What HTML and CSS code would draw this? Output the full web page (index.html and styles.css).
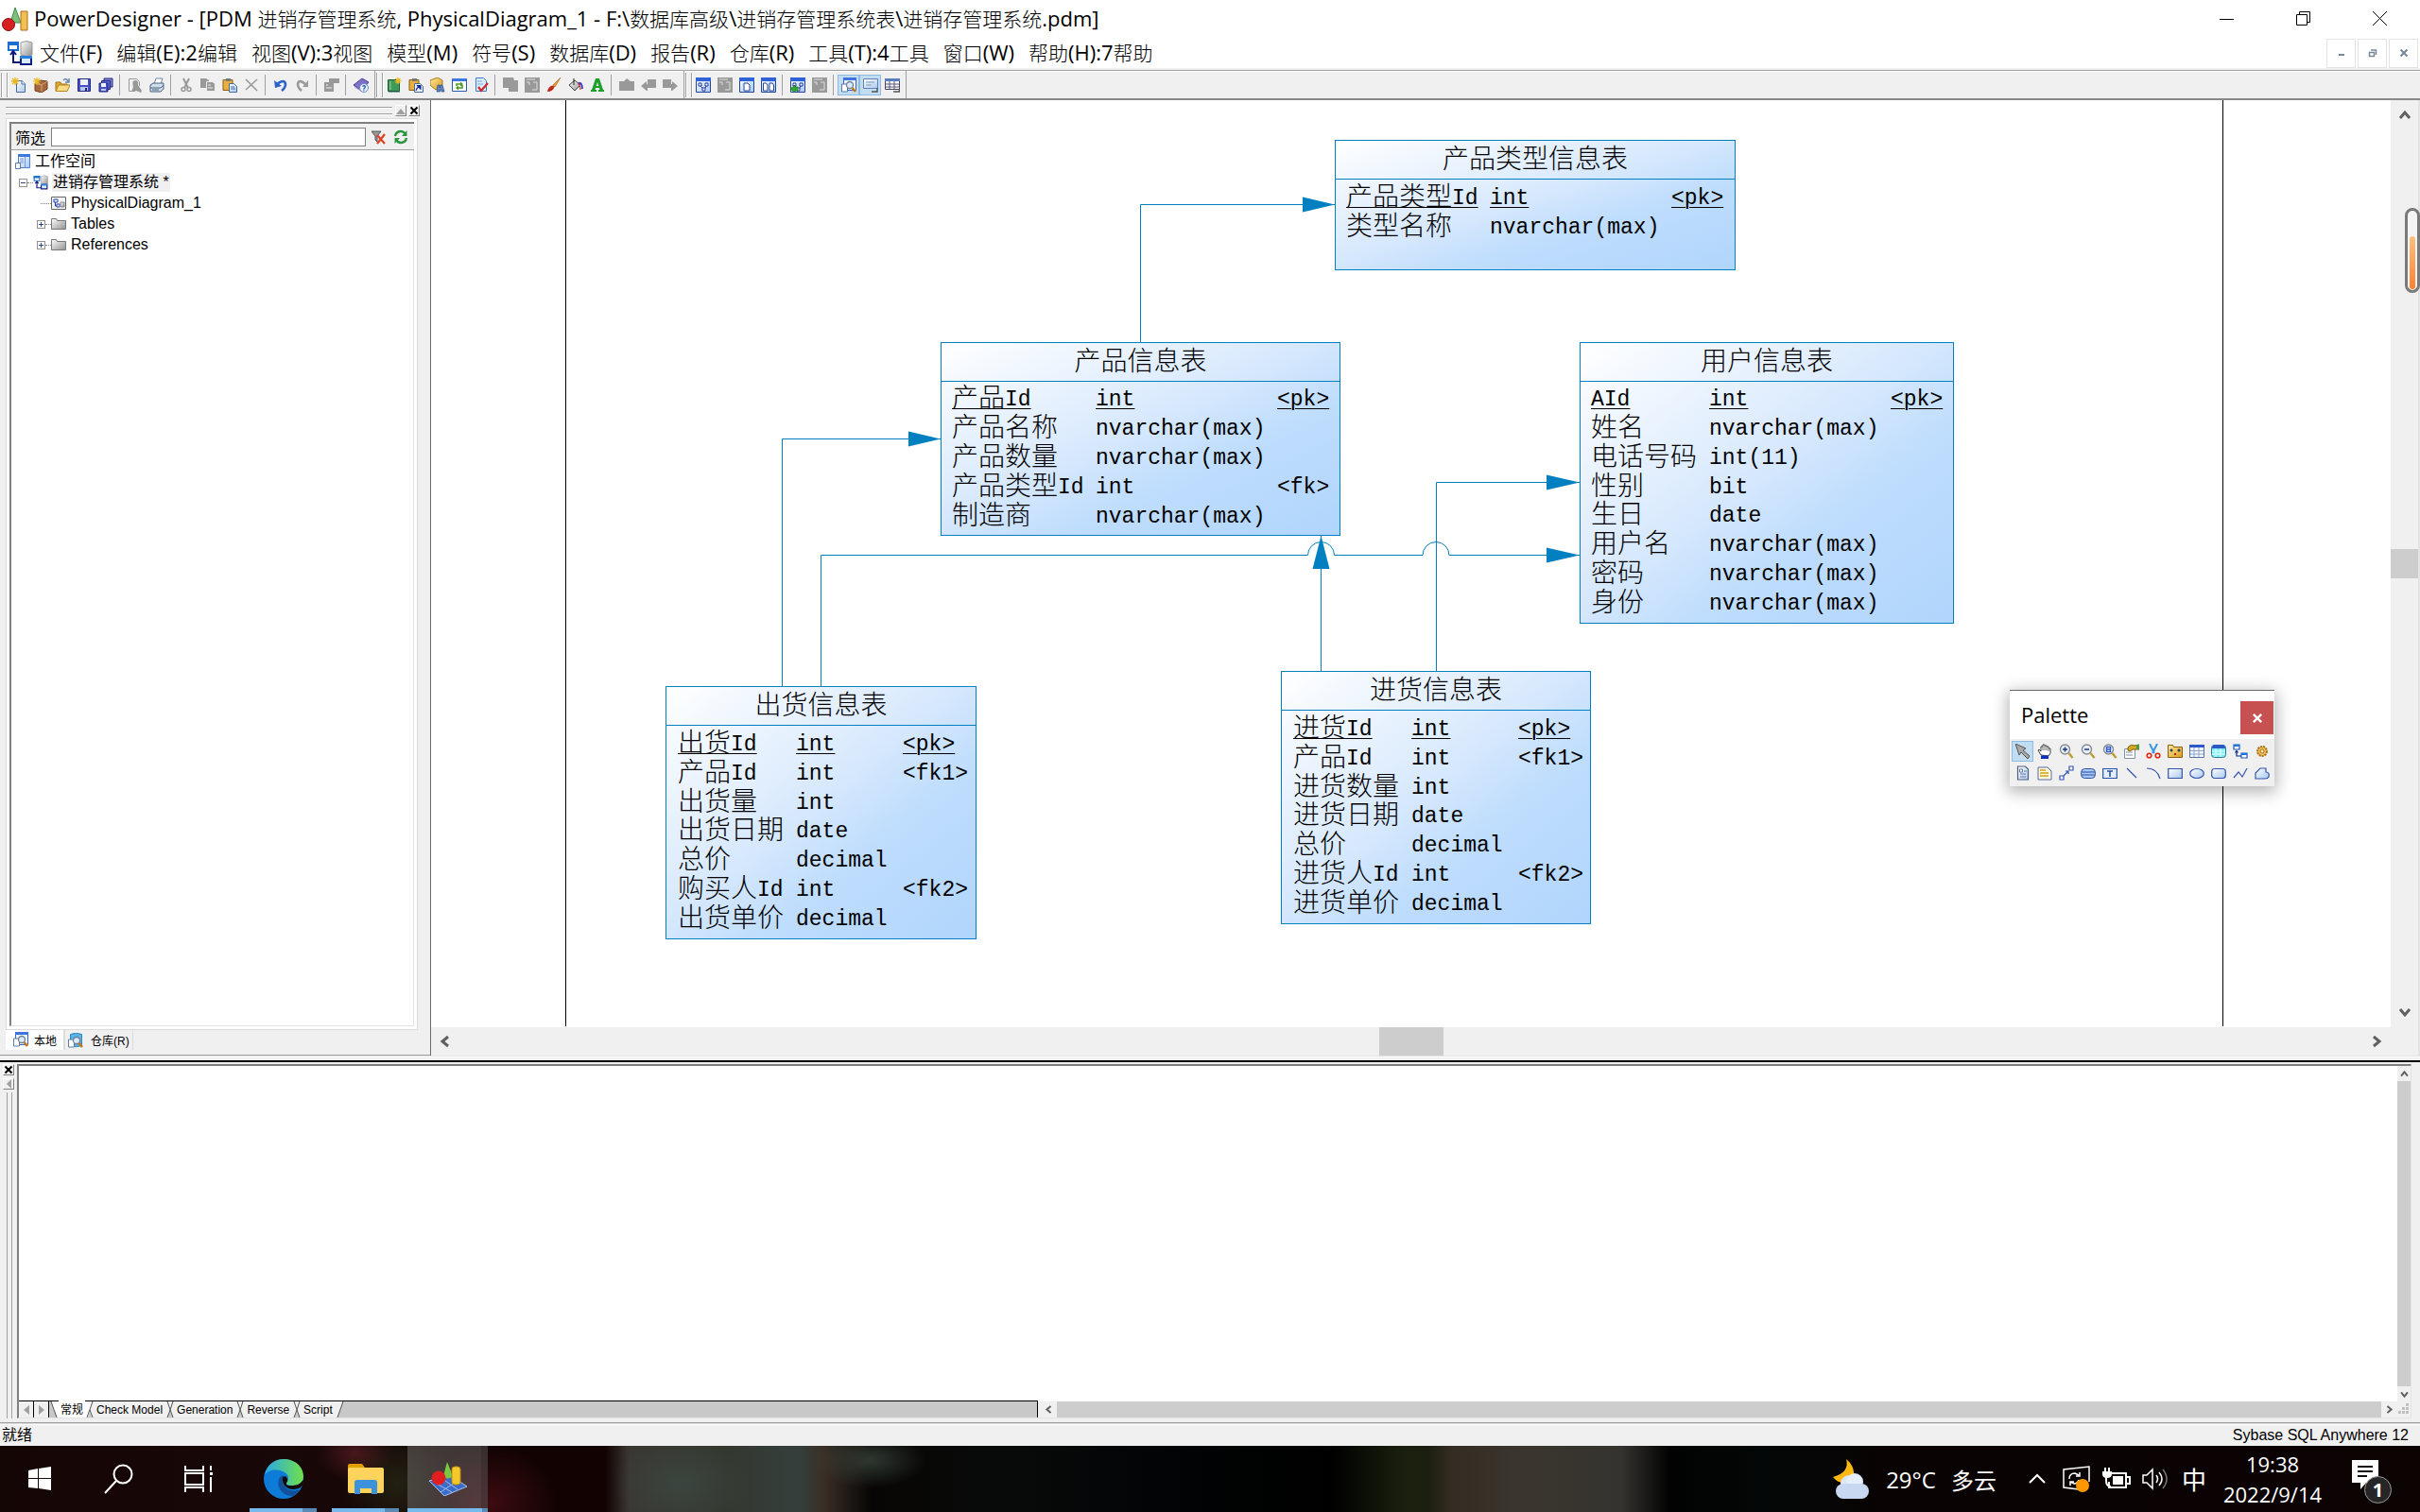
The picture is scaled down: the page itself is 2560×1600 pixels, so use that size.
FILE: index.html
```html
<!DOCTYPE html>
<html lang="zh-CN">
<head>
<meta charset="utf-8">
<title>PowerDesigner</title>
<link rel="stylesheet" href="styles.css">
</head>
<body>
<svg class="defs" aria-hidden="true">
  <defs>
    <linearGradient id="gBlue" x1="0" y1="0" x2="1" y2="1"><stop offset="0" stop-color="#fff"/><stop offset="1" stop-color="#a9c8f0"/></linearGradient>
    <linearGradient id="gGold" x1="0" y1="0" x2="1" y2="1"><stop offset="0" stop-color="#ffe9a0"/><stop offset="1" stop-color="#d99a1c"/></linearGradient>
    <linearGradient id="gEdge" x1="0" y1="0" x2="1" y2="0"><stop offset="0" stop-color="#2aa7e8"/><stop offset="1" stop-color="#6fe04a"/></linearGradient>
    <linearGradient id="gGray" x1="0" y1="0" x2="1" y2="1"><stop offset="0" stop-color="#fff"/><stop offset="1" stop-color="#909090"/></linearGradient>
  </defs>
  <symbol id="app" viewBox="0 0 28 28"><path d="M14 2l6 16H9z" fill="#7cc07c" stroke="#3c8c4c"/><path d="M20 6h7v20h-7z" fill="#f0c050" stroke="#b06a20"/><circle cx="7" cy="20" r="6.500" fill="#d82020" stroke="#8a1010"/></symbol>
  <symbol id="model" viewBox="0 0 28 28"><path d="M15 3q6-3 12 0v13q-6 3-12 0z" fill="url(#gGray)" stroke="#999"/><path d="M2 3h10v8H2z" fill="#fff" stroke="#1c6fd0" stroke-width="2"/><path d="M1 2h12v4H1z" fill="#1c6fd0"/><path d="M15 18h11v8H15z" fill="#d8ecff" stroke="#102080" stroke-width="2"/><path d="M14 17h13v3H14z" fill="#2a7fe0"/><path d="M14 24H7V13M4 16l3-4 3 4" fill="none" stroke="#101880" stroke-width="2"/></symbol>
  <symbol id="new" viewBox="0 0 16 16"><path d="M5.500 3.500h6l3 3v9h-9z" fill="url(#gBlue)" stroke="#456a9c"/><path d="M11 3v4h4" fill="#fff" stroke="#456a9c"/><path d="M4 0v8M0 4h8M1 1l6 6M7 1L1 7" stroke="#eab820" stroke-width="1.300"/></symbol>
  <symbol id="project" viewBox="0 0 16 16"><path d="M2 6l6-3 7 1v8l-6 4-7-2z" fill="#a5673c" stroke="#6e3d1d"/><path d="M2 6l7 2 6-4M9 8v7" stroke="#d7a47e" fill="none"/><path d="M4 0v8M0 4h8M1 1l6 6M7 1L1 7" stroke="#eab820" stroke-width="1.200"/></symbol>
  <symbol id="open" viewBox="0 0 16 16"><path d="M1 14V5h5l1 2h6v2" fill="#e0a836" stroke="#a87412"/><path d="M1 14.500L4 8h12l-3 6.500z" fill="#f9dc86" stroke="#b8861c"/><path d="M9 3q3-3 5 1M15 1v4h-4" fill="none" stroke="#5c80a8" stroke-width="1.300"/></symbol>
  <symbol id="save" viewBox="0 0 16 16"><path d="M1.500 1.500h13v13h-13z" fill="#4a50c8" stroke="#24287c"/><path d="M4 2h8v6H4z" fill="#eef2ff"/><path d="M4 10h8v4H4z" fill="#b9c8ea"/><path d="M9 11h2v3H9z" fill="#24287c"/></symbol>
  <symbol id="saveall" viewBox="0 0 16 16"><path d="M6 1h9v9H6z" fill="#7a7fd8" stroke="#24287c"/><path d="M3.500 3.500h9v9h-9z" fill="#6067d0" stroke="#24287c"/><path d="M1 6h9v9H1z" fill="#4a50c8" stroke="#24287c"/><path d="M3 6h5v4H3z" fill="#eef2ff"/><path d="M3 12h5v2H3z" fill="#b9c8ea"/></symbol>
  <symbol id="preview" viewBox="0 0 16 16"><path d="M8 14.500H1.500v-13h8l3 3V9" fill="none" stroke="#999"/><path d="M8 3q4 0 3 5l4 6-1 2-5-2-5 1 2-5q-2-7 2-7" fill="#999"/></symbol>
  <symbol id="print" viewBox="0 0 16 16"><path d="M5 7l2-6h7l-2 6" fill="#fff" stroke="#6d87a5"/><path d="M1 8l3-2h11v6l-3 3H1z" fill="#cfdcea" stroke="#4a6280"/><path d="M1 11h11l3-3M3 13h7" fill="none" stroke="#4a6280"/></symbol>
  <symbol id="cut" viewBox="0 0 16 16"><path d="M5 1l5 10M11 1L6 11" stroke="#999" stroke-width="2"/><circle cx="5" cy="12.500" r="2" fill="none" stroke="#999" stroke-width="1.500"/><circle cx="11" cy="12.500" r="2" fill="none" stroke="#999" stroke-width="1.500"/></symbol>
  <symbol id="copy" viewBox="0 0 16 16"><path d="M0 1h6l3 2v8H0z" fill="#999"/><path d="M6.500 4.500h6l3 2v8h-9z" fill="#999" stroke="#eee"/><path d="M8 8h3M8 11h5" stroke="#eee"/></symbol>
  <symbol id="paste" viewBox="0 0 16 16"><path d="M1 2.500h10v11H1z" fill="#e8b040" stroke="#8c6010"/><path d="M4 1h5v3H4z" fill="#777"/><path d="M7.500 6.500h5l3 3v6h-8z" fill="url(#gBlue)" stroke="#456a9c"/><path d="M9 10h4M9 12h5" stroke="#456a9c"/></symbol>
  <symbol id="pastelink" viewBox="0 0 16 16"><path d="M1 2.500h10v11H1z" fill="#e8b040" stroke="#8c6010"/><path d="M4 1h5v3H4z" fill="#777"/><path d="M6.500 6.500h6l3 3v6h-9z" fill="#e9f0fb" stroke="#456a9c"/><path d="M8 14q0-3 3-4M9 8.500h4v4z" fill="#102090" stroke="#102090"/></symbol>
  <symbol id="del" viewBox="0 0 16 16"><path d="M2 2l12 12M14 2L2 13" stroke="#999" stroke-width="1.600"/></symbol>
  <symbol id="undo" viewBox="0 0 16 16"><path d="M4 7q8-6 9 0 0 4-4 7" fill="none" stroke="#2b62cc" stroke-width="2.600"/><path d="M1 3l1 8 7-2z" fill="#2b62cc"/></symbol>
  <symbol id="redo" viewBox="0 0 16 16"><path d="M11 7Q4 1 3 7q0 4 4 7" fill="none" stroke="#999" stroke-width="2.600"/><path d="M14 3v7H8z" fill="#999"/></symbol>
  <symbol id="props" viewBox="0 0 16 16"><path d="M0 5h10v10H0zM5 1h11v5H5z" fill="#999"/><path d="M2 8h2M2 11h6" stroke="#eee"/></symbol>
  <symbol id="help" viewBox="0 0 16 16"><path d="M0 8l9-7 7 4-8 9z" fill="#7d70c8" stroke="#4a3f96"/><path d="M1 10l8 5 6-7" fill="none" stroke="#b0a8e0"/><circle cx="11" cy="11" r="4.500" fill="#e8f1fc" stroke="#6d8cc0"/><path d="M9.500 9.700q1.500-2 3 0 0 1-1.500 2v1M11 13.200v1" fill="none" stroke="#2450b0" stroke-width="1.200"/></symbol>
  <symbol id="book" viewBox="0 0 16 16"><path d="M1.500 2.500h12v12h-12z" fill="#3f9a58" stroke="#1c5a30"/><path d="M4 4v9" stroke="#9ad0a8"/><path d="M2 15.500h12" stroke="#8ca0c0"/><path d="M12 0v7M8.500 3.500h7M9.500 1l5 5M14.500 1l-5 5" stroke="#eab820" stroke-width="1.200"/></symbol>
  <symbol id="find" viewBox="0 0 16 16"><path d="M0 3l8-3 5 3v5l-7 5-6-5z" fill="url(#gGold)" stroke="#a9781c"/><path d="M7 15l1-7h2l.5 3 .5-3h2l2 7h-3v-2h-1.500v2z" fill="#5f86c0" stroke="#2a4880" stroke-width=".7"/></symbol>
  <symbol id="sync" viewBox="0 0 16 16"><path d="M.5 1.500h15v13H.5z" fill="#fff" stroke="#2c5cb0"/><path d="M1 1h14v3H1z" fill="#3a78e0"/><path d="M5 9V7h5M11 8v3H6" fill="none" stroke="#4c9a20" stroke-width="1.600"/><path d="M9 4.500L12 7 9 9.500zM7 8.500L4 11l3 2.500z" fill="#4c9a20"/></symbol>
  <symbol id="check" viewBox="0 0 16 16"><path d="M2.500.5h8l3 3v11h-11z" fill="#d8ebff" stroke="#3c7cc8"/><path d="M4 4h5M4 7h6" stroke="#7aa8e0"/><path d="M5 10l3 4 7-8" fill="none" stroke="#d02828" stroke-width="2.200"/></symbol>
  <symbol id="gfront" viewBox="0 0 16 16"><path d="M0 0h11l1 3h4v12H6v-4H0z" fill="#999"/></symbol>
  <symbol id="gback" viewBox="0 0 16 16"><path d="M0 0h16v16H0z" fill="#999"/><path d="M2 2h9M2 5h3v3M9 5h4v8H8" fill="none" stroke="#ddd"/></symbol>
  <symbol id="brush" viewBox="0 0 16 16"><path d="M15 0L7 8l2 2z" fill="#e8a030" stroke="#b06a10" stroke-width=".7"/><path d="M1 15q1-6 6-6.500l1.500 1.500Q7 15 1 15z" fill="#c02818"/></symbol>
  <symbol id="fill" viewBox="0 0 16 16"><path d="M1 8l6-5 6 5-6 6z" fill="url(#gGray)" stroke="#444"/><path d="M6 1v7" stroke="#222"/><path d="M11 6q4-1 4 6" fill="none" stroke="#3030d0" stroke-width="1.600"/><path d="M10.500 7q2.500 0 2.500 6" fill="none" stroke="#e03030" stroke-width="1.300"/></symbol>
  <symbol id="font" viewBox="0 0 16 16"><path d="M6 1h4l4 12h1v2h-6v-2h1.500l-.7-2H6.200l-.7 2H7v2H1v-2h1zM8 5L6.800 9h2.400z" fill="#1fa02c"/></symbol>
  <symbol id="gup" viewBox="0 0 16 16"><path d="M0 4h5l3-3 4 3h4v10H0z" fill="#999"/></symbol>
  <symbol id="gleft" viewBox="0 0 16 16"><path d="M0 9l6-5v3h1V2h9v9H7v3H6z" fill="#999"/></symbol>
  <symbol id="gright" viewBox="0 0 16 16"><path d="M16 9l-6-5v3H9V2H0v9h9v3h1z" fill="#999"/></symbol>
  <symbol id="win" viewBox="0 0 16 16"><path d="M.5.5h15v15H.5z" fill="url(#gBlue)" stroke="#24449c"/><path d="M0 0h16v4H0z" fill="#2f62d8"/></symbol>
  <symbol id="dia" viewBox="0 0 16 16"><use href="#win"/><path d="M3 6h3v3H3zM10 6h3v3h-3zM7 11h3v3H7zM5 9l2 2M11 9l-1 2" fill="#fff" stroke="#1c34a0"/></symbol>
  <symbol id="page1" viewBox="0 0 16 16"><use href="#win"/><path d="M5 6h4l2 2v6H5z" fill="#fff" stroke="#24449c"/></symbol>
  <symbol id="page2" viewBox="0 0 16 16"><use href="#win"/><path d="M2.500 6h3l1.500 2v6H2.500zM9 6h3l1.500 2v6H9z" fill="#fff" stroke="#24449c"/></symbol>
  <symbol id="diaback" viewBox="0 0 16 16"><use href="#dia"/><path d="M0 12l5-4v2h3v4H5v2z" fill="#2fa82c" stroke="#176a18" stroke-width=".6"/></symbol>
  <symbol id="browser" viewBox="0 0 16 16"><path d="M2.500.5h13v13h-13z" fill="#eef5ff" stroke="#3a68c0"/><path d="M2 0h14v3H2z" fill="#3f74e0"/><path d="M.5 7h6v8h-6z" fill="#fff" stroke="#5c7ca8"/><circle cx="9" cy="8" r="3.500" fill="#dcecff" stroke="#708090" stroke-width="1.300"/><path d="M11.500 11l3.500 4" stroke="#c87414" stroke-width="2.600"/></symbol>
  <symbol id="repo" viewBox="0 0 16 16"><path d="M2.500 1.500q6-2.500 12 0v12q-6 2.500-12 0z" fill="#58b4e8" stroke="#2f86c0"/><path d="M.5 7h6v8h-6z" fill="#fff" stroke="#5c7ca8"/><circle cx="9" cy="8" r="3.500" fill="#dcecff" stroke="#708090" stroke-width="1.300"/><path d="M11.500 11l3.500 4" stroke="#c87414" stroke-width="2.600"/></symbol>
  <symbol id="output" viewBox="0 0 16 16"><path d="M.5 1.500h15v10h-15z" fill="url(#gBlue)" stroke="#6680b0"/><path d="M3 5h9M3 8h6" stroke="#8098b8"/><path d="M15 11v4H9" fill="none" stroke="#555" stroke-width="1.500"/></symbol>
  <symbol id="result" viewBox="0 0 16 16"><path d="M.5 1.500h15v11h-15z" fill="#fff" stroke="#446"/><path d="M0 1h16v3H0z" fill="#5c7cc0"/><path d="M1 7h14M1 10h14M5 4v8M10 4v8" stroke="#557"/><path d="M15.500 12v3H9" fill="none" stroke="#555" stroke-width="1.500"/></symbol>
  <symbol id="nofilter" viewBox="0 0 16 16"><path d="M0 2h10L6 7v6L4 11V7z" fill="#999" stroke="#555"/><path d="M6 6l8 9M14 5l-8 10" stroke="#e04020" stroke-width="2.200"/></symbol>
  <symbol id="refresh" viewBox="0 0 16 16"><path d="M2 7q1-5 6-5 3 0 5 3M14 9q-1 5-6 5-3 0-5-3" fill="none" stroke="#2a9440" stroke-width="2.400"/><path d="M14.500 1v6H9zM1.500 15V9H7z" fill="#2a9440"/></symbol>
  <symbol id="works" viewBox="0 0 16 16"><path d="M3.500.5h12v14h-12z" fill="url(#gBlue)" stroke="#4a80d0"/><path d="M3 0h13v3H3z" fill="#3f78dc"/><path d="M5 5h4M5 7h4M5 9h4M10.500 3v11" stroke="#6e9ce0"/><path d="M.5 9.500h5v6h-5z" fill="#fff" stroke="#5c7ca8"/></symbol>
  <symbol id="pdiag" viewBox="0 0 16 16"><path d="M.5 1.500h15v13H.5z" fill="#f4f4f4" stroke="#666"/><path d="M3 4h4v3H3zM6 9h3v3H6zM4.500 7v4H6" fill="#fff" stroke="#1840b0"/><path d="M10 7h4v5h-4z" fill="url(#gGray)" stroke="#888"/></symbol>
  <symbol id="folder" viewBox="0 0 16 16"><path d="M.5 13.500v-11h5l1 2h9v9z" fill="url(#gGray)" stroke="#777"/></symbol>
  <symbol id="arrow" viewBox="0 0 16 16"><path d="M0 0l11 5-3 2 7 6-2 3-7-7-2 3z" fill="#a8a8a8" stroke="#555"/></symbol>
  <symbol id="hand" viewBox="0 0 16 16"><path d="M4 12L1 7l1-1 2 2V3h2V1h2v1h2v1h2v2h2v5l-2 3z" fill="#fff" stroke="#333" stroke-width=".9"/><path d="M6 3v4M8 2v5M10 3v4M12 5v3" stroke="#333" stroke-width=".7"/><path d="M4 12.500h8V16H4z" fill="#1030c0"/></symbol>
  <symbol id="lens" viewBox="0 0 16 16"><circle cx="6.500" cy="6" r="5" fill="#e4f0ff" stroke="#8a8a8a" stroke-width="1.400"/><path d="M10.500 10l4 5" stroke="#c09a30" stroke-width="2.400"/></symbol>
  <symbol id="zin" viewBox="0 0 16 16"><use href="#lens"/><path d="M4 6h5M6.500 3.500v5" stroke="#223a70" stroke-width="1.500"/></symbol>
  <symbol id="zout" viewBox="0 0 16 16"><use href="#lens"/><path d="M4 6h5" stroke="#223a70" stroke-width="1.500"/></symbol>
  <symbol id="zpage" viewBox="0 0 16 16"><use href="#lens"/><path d="M4.500 3.500h4v5h-4zM4.500 6h4" fill="#fff" stroke="#2c56d0" stroke-width="1.300"/></symbol>
  <symbol id="prop2" viewBox="0 0 16 16"><path d="M.5 5.500h11v10H.5z" fill="#fff" stroke="#8090a8"/><path d="M2 9h7M2 12h7" stroke="#8090a8"/><path d="M4 4q3-4 7-2l5-1v5H9q-3 3-5 1z" fill="#d8ac24" stroke="#7c5c08"/><path d="M13 1h3v5h-3z" fill="#4c9a40"/></symbol>
  <symbol id="scis" viewBox="0 0 16 16"><path d="M4 0l5 10M12 0L7 10" stroke="#3a98e0" stroke-width="2"/><circle cx="3.500" cy="12.500" r="2.300" fill="none" stroke="#e02810" stroke-width="1.600"/><circle cx="12.500" cy="12.500" r="2.300" fill="none" stroke="#e02810" stroke-width="1.600"/></symbol>
  <symbol id="pkg" viewBox="0 0 16 16"><path d="M.5 14.500v-13h5l1 2h9v11z" fill="url(#gGold)" stroke="#8c6010"/><path d="M3 6h2v2H3zM11 6h2v2h-2z" fill="#1878a0" stroke="#222" stroke-width=".6"/><path d="M7 10h2v2H7z" fill="#c02020"/></symbol>
  <symbol id="tbl" viewBox="0 0 16 16"><path d="M.5 1.500h15v13H.5z" fill="#f4f8ff" stroke="#5870a8"/><path d="M0 1h16v3H0z" fill="#2c58c8"/><path d="M1 7.500h14M1 11h14M5 4v10M10 4v10" stroke="#8fa4cc"/></symbol>
  <symbol id="view" viewBox="0 0 16 16"><rect x=".5" y="1.500" width="15" height="13" rx="3" fill="#7df0f4" stroke="#2a7890"/><path d="M1 5q0-4 3-4h8q3 0 3 4z" fill="#2c58c8"/><path d="M1 8h14M1 11h14M5 5v9M10 5v9" stroke="#e8ffff"/></symbol>
  <symbol id="ref" viewBox="0 0 16 16"><path d="M1 1h6v5H1zM9 10h6v5H9z" fill="#fff" stroke="#1c58c0" stroke-width="1.200"/><path d="M1 1h6v2H1zM9 10h6v2H9z" fill="#1c78e0"/><path d="M4 7v6h5M2.500 9.500L4 7.500l1.500 2" fill="none" stroke="#102c90" stroke-width="1.200"/></symbol>
  <symbol id="gear" viewBox="0 0 16 16"><circle cx="8" cy="8" r="5" fill="#f0bc58" stroke="#a87018" stroke-width="2" stroke-dasharray="2 1"/><circle cx="8" cy="8" r="2" fill="#fff0c0" stroke="#a87018"/></symbol>
  <symbol id="file" viewBox="0 0 16 16"><path d="M2.500 1h8l3 3v11h-11z" fill="url(#gBlue)" stroke="#50607c" stroke-width="1.200"/><path d="M4.500 4h3v3h-3zM9 6h3M5 9h6M5 12h6" fill="#fff" stroke="#6878a0"/></symbol>
  <symbol id="note" viewBox="0 0 16 16"><path d="M1 2h10l4 4v9H1z" fill="#fffbe0" stroke="#5868a0"/><path d="M3 5h6M3 8h9M3 11h9" stroke="#d8a010" stroke-width="1.300"/></symbol>
  <symbol id="link" viewBox="0 0 16 16"><path d="M1 11h4v4H1zM11 1h4v4h-4z" fill="#fff" stroke="#3454b0" stroke-width="1.200"/><path d="M5 11l5-5M7 6h3v3" fill="none" stroke="#3454b0" stroke-width="1.200"/></symbol>
  <symbol id="title" viewBox="0 0 16 16"><rect x=".5" y="3.500" width="15" height="10" rx="4" fill="#a8c8f4" stroke="#2c50a8"/><path d="M1 7h14M1 10h14" stroke="#2c50a8"/></symbol>
  <symbol id="text" viewBox="0 0 16 16"><path d="M.7 3.500h14.600v10H.7z" fill="#e4f0ff" stroke="#2c50a8" stroke-width="1.200"/><path d="M5 6h6M8 6v6" stroke="#2c50a8" stroke-width="1.600"/></symbol>
  <symbol id="line" viewBox="0 0 16 16"><path d="M3 3l10 10" stroke="#3454b0" stroke-width="1.200"/></symbol>
  <symbol id="arc" viewBox="0 0 16 16"><path d="M1 3q11 0 14 11" fill="none" stroke="#3454b0" stroke-width="1.200"/></symbol>
  <symbol id="rect" viewBox="0 0 16 16"><path d="M.7 3.500h14.600v10H.7z" fill="url(#gBlue)" stroke="#3454b0" stroke-width="1.200"/></symbol>
  <symbol id="oval" viewBox="0 0 16 16"><ellipse cx="8" cy="8.500" rx="7.300" ry="5" fill="url(#gBlue)" stroke="#3454b0" stroke-width="1.200"/></symbol>
  <symbol id="rrect" viewBox="0 0 16 16"><rect x=".7" y="3.500" width="14.600" height="10" rx="3" fill="url(#gBlue)" stroke="#3454b0" stroke-width="1.200"/></symbol>
  <symbol id="poly" viewBox="0 0 16 16"><path d="M1 13l5-6 4 5 5-9" fill="none" stroke="#3454b0" stroke-width="1.200"/></symbol>
  <symbol id="gon" viewBox="0 0 16 16"><path d="M1 14V8l5-5h6v4q4 0 3 5-1 2-4 2z" fill="url(#gBlue)" stroke="#3454b0" stroke-width="1.200"/></symbol>
  <symbol id="up" viewBox="0 0 16 16"><path d="M3 11l5-6 5 6" fill="none" stroke="#606060" stroke-width="3"/></symbol>
  <symbol id="down" viewBox="0 0 16 16"><path d="M3 5l5 6 5-6" fill="none" stroke="#606060" stroke-width="3"/></symbol>
  <symbol id="left" viewBox="0 0 16 16"><path d="M11 3L5 8l6 5" fill="none" stroke="#606060" stroke-width="3"/></symbol>
  <symbol id="right" viewBox="0 0 16 16"><path d="M5 3l6 5-6 5" fill="none" stroke="#606060" stroke-width="3"/></symbol>
  <symbol id="x" viewBox="0 0 10 10"><path d="M1.500 1.500l7 7M8.500 1.500l-7 7" stroke="currentColor" stroke-width="2"/></symbol>
</svg>

<header class="titlebar">
  <svg class="title-icon"><use href="#app"/></svg>
  <h1 class="title-text">PowerDesigner - [PDM <span class="zh">进销存管理系统</span>, PhysicalDiagram_1 - F:\<span class="zh">数据库高级</span>\<span class="zh">进销存管理系统表</span>\<span class="zh">进销存管理系统</span>.pdm]</h1>
  <button class="win-btn" aria-label="最小化"><svg width="16" height="16"><path d="M0 8.500h15" stroke="#000"/></svg></button>
  <button class="win-btn" aria-label="还原"><svg width="16" height="16"><path d="M.5 3.500h11v11H.5zM3.500 3.500v-3h11v11h-3" fill="none" stroke="#000"/></svg></button>
  <button class="win-btn" aria-label="关闭"><svg width="16" height="16"><path d="M0 0l15 15M15 0L0 15" stroke="#000"/></svg></button>
</header>

<nav class="menubar">
  <svg class="menu-icon"><use href="#model"/></svg>
  <button class="menu"><span class="zh">文件</span>(F)</button>
  <button class="menu"><span class="zh">编辑</span>(E):2<span class="zh">编辑</span></button>
  <button class="menu"><span class="zh">视图</span>(V):3<span class="zh">视图</span></button>
  <button class="menu"><span class="zh">模型</span>(M)</button>
  <button class="menu"><span class="zh">符号</span>(S)</button>
  <button class="menu"><span class="zh">数据库</span>(D)</button>
  <button class="menu"><span class="zh">报告</span>(R)</button>
  <button class="menu"><span class="zh">仓库</span>(R)</button>
  <button class="menu"><span class="zh">工具</span>(T):4<span class="zh">工具</span></button>
  <button class="menu"><span class="zh">窗口</span>(W)</button>
  <button class="menu"><span class="zh">帮助</span>(H):7<span class="zh">帮助</span></button>
  <div class="mdi">
    <button class="mdi-btn" aria-label="最小化"><svg width="10" height="10"><path d="M2 7h6" stroke="currentColor" stroke-width="2"/></svg></button>
    <button class="mdi-btn" aria-label="还原"><svg width="10" height="10"><path d="M1.500 4.500h5v4h-5zM3 2h5.500v5" fill="none" stroke="currentColor" stroke-width="1.500"/></svg></button>
    <button class="mdi-btn" aria-label="关闭"><svg width="10" height="10"><use href="#x"/></svg></button>
  </div>
</nav>

<div class="toolbars">
  <div class="toolbar">
    <button class="tool" aria-label="新建"><svg><use href="#new"/></svg></button>
    <button class="tool" aria-label="新建项目"><svg><use href="#project"/></svg></button>
    <button class="tool" aria-label="打开"><svg><use href="#open"/></svg></button>
    <button class="tool" aria-label="保存"><svg><use href="#save"/></svg></button>
    <button class="tool" aria-label="全部保存"><svg><use href="#saveall"/></svg></button>
    <i class="sep"></i>
    <button class="tool" aria-label="打印预览"><svg><use href="#preview"/></svg></button>
    <button class="tool" aria-label="打印"><svg><use href="#print"/></svg></button>
    <i class="sep"></i>
    <button class="tool" aria-label="剪切"><svg><use href="#cut"/></svg></button>
    <button class="tool" aria-label="复制"><svg><use href="#copy"/></svg></button>
    <button class="tool" aria-label="粘贴"><svg><use href="#paste"/></svg></button>
    <button class="tool" aria-label="删除"><svg><use href="#del"/></svg></button>
    <i class="sep"></i>
    <button class="tool" aria-label="撤销"><svg><use href="#undo"/></svg></button>
    <button class="tool" aria-label="重做"><svg><use href="#redo"/></svg></button>
    <i class="sep"></i>
    <button class="tool" aria-label="属性"><svg><use href="#props"/></svg></button>
    <i class="sep"></i>
    <button class="tool" aria-label="帮助"><svg><use href="#help"/></svg></button>
  </div>
  <div class="toolbar">
    <button class="tool" aria-label="新建图"><svg><use href="#book"/></svg></button>
    <button class="tool" aria-label="粘贴为快捷方式"><svg><use href="#pastelink"/></svg></button>
    <button class="tool" aria-label="查找对象"><svg><use href="#find"/></svg></button>
    <button class="tool" aria-label="更新"><svg><use href="#sync"/></svg></button>
    <button class="tool" aria-label="检查模型"><svg><use href="#check"/></svg></button>
    <i class="sep"></i>
    <button class="tool" aria-label="置于顶层"><svg><use href="#gfront"/></svg></button>
    <button class="tool" aria-label="置于底层"><svg><use href="#gback"/></svg></button>
    <button class="tool" aria-label="线条"><svg><use href="#brush"/></svg></button>
    <button class="tool" aria-label="填充"><svg><use href="#fill"/></svg></button>
    <button class="tool" aria-label="字体"><svg><use href="#font"/></svg></button>
    <i class="sep"></i>
    <button class="tool" aria-label="向上"><svg><use href="#gup"/></svg></button>
    <button class="tool" aria-label="后退"><svg><use href="#gleft"/></svg></button>
    <button class="tool" aria-label="前进"><svg><use href="#gright"/></svg></button>
  </div>
  <div class="toolbar">
    <button class="tool" aria-label="图"><svg><use href="#dia"/></svg></button>
    <button class="tool" aria-label="上级图"><svg><use href="#gback"/></svg></button>
    <button class="tool" aria-label="整页"><svg><use href="#page1"/></svg></button>
    <button class="tool" aria-label="所有页"><svg><use href="#page2"/></svg></button>
    <i class="sep"></i>
    <button class="tool" aria-label="上一视图"><svg><use href="#diaback"/></svg></button>
    <button class="tool" aria-label="下一视图"><svg><use href="#gback"/></svg></button>
    <i class="sep"></i>
    <button class="tool on" aria-label="浏览器"><svg><use href="#browser"/></svg></button>
    <button class="tool on" aria-label="输出"><svg><use href="#output"/></svg></button>
    <button class="tool" aria-label="结果列表"><svg><use href="#result"/></svg></button>
  </div>
</div>

<main class="workspace">
  <aside class="browser">
    <div class="dock-head">
      <div class="grip"></div>
      <button class="dock-btn" aria-label="最大化"><svg width="10" height="10"><path d="M0 9l5-6 5 6z" fill="#a0a0a0"/></svg></button>
      <button class="dock-btn" aria-label="关闭"><svg width="10" height="10"><use href="#x"/></svg></button>
    </div>
    <div class="pane">
      <div class="filter">
        <label for="filter">筛选</label>
        <input id="filter" type="text">
        <button class="tool" aria-label="清除筛选"><svg><use href="#nofilter"/></svg></button>
        <button class="tool" aria-label="刷新"><svg><use href="#refresh"/></svg></button>
      </div>
      <ul class="tree">
        <li><svg class="ico"><use href="#works"/></svg><span>工作空间</span></li>
        <li class="lv1"><i class="box minus"></i><i class="dots"></i><svg class="ico"><use href="#model"/></svg><span class="sel">进销存管理系统 *</span></li>
        <li class="lv2"><i class="dots long"></i><svg class="ico"><use href="#pdiag"/></svg><span>PhysicalDiagram_1</span></li>
        <li class="lv2"><i class="box plus"></i><i class="dots"></i><svg class="ico"><use href="#folder"/></svg><span>Tables</span></li>
        <li class="lv2"><i class="box plus"></i><i class="dots"></i><svg class="ico"><use href="#folder"/></svg><span>References</span></li>
      </ul>
    </div>
    <div class="dock-tabs">
      <button class="dock-tab active"><svg class="ico"><use href="#browser"/></svg>本地</button>
      <button class="dock-tab"><svg class="ico"><use href="#repo"/></svg>仓库(R)</button>
    </div>
  </aside>

  <section class="editor">
    <div class="canvas">
      <i class="page-edge edge-l"></i>
      <i class="page-edge edge-r"></i>
      <svg class="wires" width="1700" height="900">
        <g fill="none" stroke="#0080c0">
          <path d="M750.500 256V110.500H956"/>
          <path d="M371.500 620V358.500H539"/>
          <path d="M412.500 620V481.500H927.500a14 14 0 0 1 28 0h93.500a14 14 0 0 1 28 0H1215"/>
          <path d="M941.500 604V461"/>
          <path d="M1063.500 604V404.500H1215"/>
        </g>
        <g fill="#0080c0">
          <path d="M922 102.500l34 8-34 8zM505 350.500l34 8-34 8zM1180 473.500l35 8-35 8zM1180 396.500l35 8-35 8zM941.500 461l9 35h-18z"/>
        </g>
      </svg>

      <article class="node n-type wide">
        <h2>产品类型信息表</h2>
        <table>
          <tr><td><u><span class="cjk">产品类型</span>Id</u></td><td><u>int</u></td><td><u>&lt;pk&gt;</u></td></tr>
          <tr><td><span class="cjk">类型名称</span></td><td>nvarchar(max)</td><td></td></tr>
        </table>
      </article>

      <article class="node n-product wide">
        <h2>产品信息表</h2>
        <table>
          <tr><td><u><span class="cjk">产品</span>Id</u></td><td><u>int</u></td><td><u>&lt;pk&gt;</u></td></tr>
          <tr><td><span class="cjk">产品名称</span></td><td>nvarchar(max)</td><td></td></tr>
          <tr><td><span class="cjk">产品数量</span></td><td>nvarchar(max)</td><td></td></tr>
          <tr><td><span class="cjk">产品类型</span>Id</td><td>int</td><td>&lt;fk&gt;</td></tr>
          <tr><td><span class="cjk">制造商</span></td><td>nvarchar(max)</td><td></td></tr>
        </table>
      </article>

      <article class="node n-user">
        <h2>用户信息表</h2>
        <table>
          <tr><td><u>AId</u></td><td><u>int</u></td><td><u>&lt;pk&gt;</u></td></tr>
          <tr><td><span class="cjk">姓名</span></td><td>nvarchar(max)</td><td></td></tr>
          <tr><td><span class="cjk">电话号码</span></td><td>int(11)</td><td></td></tr>
          <tr><td><span class="cjk">性别</span></td><td>bit</td><td></td></tr>
          <tr><td><span class="cjk">生日</span></td><td>date</td><td></td></tr>
          <tr><td><span class="cjk">用户名</span></td><td>nvarchar(max)</td><td></td></tr>
          <tr><td><span class="cjk">密码</span></td><td>nvarchar(max)</td><td></td></tr>
          <tr><td><span class="cjk">身份</span></td><td>nvarchar(max)</td><td></td></tr>
        </table>
      </article>

      <article class="node n-out narrow">
        <h2>出货信息表</h2>
        <table>
          <tr><td><u><span class="cjk">出货</span>Id</u></td><td><u>int</u></td><td><u>&lt;pk&gt;</u></td></tr>
          <tr><td><span class="cjk">产品</span>Id</td><td>int</td><td>&lt;fk1&gt;</td></tr>
          <tr><td><span class="cjk">出货量</span></td><td>int</td><td></td></tr>
          <tr><td><span class="cjk">出货日期</span></td><td>date</td><td></td></tr>
          <tr><td><span class="cjk">总价</span></td><td>decimal</td><td></td></tr>
          <tr><td><span class="cjk">购买人</span>Id</td><td>int</td><td>&lt;fk2&gt;</td></tr>
          <tr><td><span class="cjk">出货单价</span></td><td>decimal</td><td></td></tr>
        </table>
      </article>

      <article class="node n-in narrow">
        <h2>进货信息表</h2>
        <table>
          <tr><td><u><span class="cjk">进货</span>Id</u></td><td><u>int</u></td><td><u>&lt;pk&gt;</u></td></tr>
          <tr><td><span class="cjk">产品</span>Id</td><td>int</td><td>&lt;fk1&gt;</td></tr>
          <tr><td><span class="cjk">进货数量</span></td><td>int</td><td></td></tr>
          <tr><td><span class="cjk">进货日期</span></td><td>date</td><td></td></tr>
          <tr><td><span class="cjk">总价</span></td><td>decimal</td><td></td></tr>
          <tr><td><span class="cjk">进货人</span>Id</td><td>int</td><td>&lt;fk2&gt;</td></tr>
          <tr><td><span class="cjk">进货单价</span></td><td>decimal</td><td></td></tr>
        </table>
      </article>

      <section class="palette">
        <header><h3>Palette</h3><button class="pal-close" aria-label="关闭"><svg width="12" height="12"><use href="#x"/></svg></button></header>
        <div class="pal-grid">
          <button class="tool on" aria-label="指针"><svg><use href="#arrow"/></svg></button>
          <button class="tool" aria-label="抓手"><svg><use href="#hand"/></svg></button>
          <button class="tool" aria-label="放大"><svg><use href="#zin"/></svg></button>
          <button class="tool" aria-label="缩小"><svg><use href="#zout"/></svg></button>
          <button class="tool" aria-label="打开图"><svg><use href="#zpage"/></svg></button>
          <button class="tool" aria-label="属性"><svg><use href="#prop2"/></svg></button>
          <button class="tool" aria-label="删除"><svg><use href="#scis"/></svg></button>
          <button class="tool" aria-label="包"><svg><use href="#pkg"/></svg></button>
          <button class="tool" aria-label="表"><svg><use href="#tbl"/></svg></button>
          <button class="tool" aria-label="视图"><svg><use href="#view"/></svg></button>
          <button class="tool" aria-label="参照"><svg><use href="#ref"/></svg></button>
          <button class="tool" aria-label="过程"><svg><use href="#gear"/></svg></button>
          <button class="tool" aria-label="文件"><svg><use href="#file"/></svg></button>
          <button class="tool" aria-label="注释"><svg><use href="#note"/></svg></button>
          <button class="tool" aria-label="链接"><svg><use href="#link"/></svg></button>
          <button class="tool" aria-label="标题"><svg><use href="#title"/></svg></button>
          <button class="tool" aria-label="文本"><svg><use href="#text"/></svg></button>
          <button class="tool" aria-label="直线"><svg><use href="#line"/></svg></button>
          <button class="tool" aria-label="弧"><svg><use href="#arc"/></svg></button>
          <button class="tool" aria-label="矩形"><svg><use href="#rect"/></svg></button>
          <button class="tool" aria-label="椭圆"><svg><use href="#oval"/></svg></button>
          <button class="tool" aria-label="圆角矩形"><svg><use href="#rrect"/></svg></button>
          <button class="tool" aria-label="折线"><svg><use href="#poly"/></svg></button>
          <button class="tool" aria-label="多边形"><svg><use href="#gon"/></svg></button>
        </div>
      </section>
    </div>
    <div class="vbar">
      <button aria-label="向上滚动"><svg><use href="#up"/></svg></button><i class="track"></i><i class="thumb"></i><i class="track"></i><button aria-label="向下滚动"><svg><use href="#down"/></svg></button>
    </div>
    <div class="hbar">
      <button aria-label="向左滚动"><svg><use href="#left"/></svg></button><i class="track"></i><i class="thumb"></i><i class="track"></i><button aria-label="向右滚动"><svg><use href="#right"/></svg></button>
    </div>
    <div class="capsule"><i></i></div>
  </section>
</main>

<section class="output">
  <div class="out-grip">
    <button class="dock-btn" aria-label="关闭"><svg width="10" height="10"><use href="#x"/></svg></button>
    <button class="dock-btn" aria-label="最大化"><svg width="10" height="10"><path d="M8 0v10L3 5z" fill="#a0a0a0"/></svg></button>
    <div class="vgrip"></div>
  </div>
  <div class="out-body">
    <div class="log"></div>
    <div class="vbar small">
      <button aria-label="向上滚动"><svg><use href="#up"/></svg></button><i class="thumb"></i><button aria-label="向下滚动"><svg><use href="#down"/></svg></button>
    </div>
    <div class="out-foot">
      <div class="tabs">
        <button class="nav-btn" aria-label="上一个"><svg width="8" height="10"><path d="M7 0v10L1 5z" fill="#a0a0a0"/></svg></button>
        <button class="nav-btn" aria-label="下一个"><svg width="8" height="10"><path d="M1 0v10l6-5z" fill="#a0a0a0"/></svg></button>
        <svg class="cut" viewBox="0 0 10 17"><path d="M2 0h8v17H8z" fill="#fff"/><path d="M2 0l6 17" stroke="#555"/></svg>
        <button class="tab active">常规</button>
        <svg class="cut" viewBox="0 0 10 17"><path d="M0 0h8L3 17H0z" fill="#fff"/><path d="M8 0h2v17H7L5 11z" fill="#f0f0f0"/><path d="M8 0L2 17M5 9l3 8" stroke="#555"/></svg>
        <button class="tab">Check Model</button>
        <svg class="cut" viewBox="0 0 10 17"><path d="M0 0h10v17H8L5 9 2 17H0z" fill="#f0f0f0"/><path d="M2 0l6 17M5 9L2 17M8 0L5 9" stroke="#555"/></svg>
        <button class="tab">Generation</button>
        <svg class="cut" viewBox="0 0 10 17"><path d="M0 0h10v17H8L5 9 2 17H0z" fill="#f0f0f0"/><path d="M2 0l6 17M5 9L2 17M8 0L5 9" stroke="#555"/></svg>
        <button class="tab">Reverse</button>
        <svg class="cut" viewBox="0 0 10 17"><path d="M0 0h10v17H8L5 9 2 17H0z" fill="#f0f0f0"/><path d="M2 0l6 17M5 9L2 17M8 0L5 9" stroke="#555"/></svg>
        <button class="tab">Script</button>
        <svg class="cut" viewBox="0 0 10 17"><path d="M0 0h8L2 17H0z" fill="#f0f0f0"/><path d="M8 0L2 17" stroke="#555"/></svg>
      </div>
      <div class="hbar small">
        <button aria-label="向左滚动"><svg><use href="#left"/></svg></button><i class="thumb"></i><button aria-label="向右滚动"><svg><use href="#right"/></svg></button>
      </div>
      <svg class="size-grip" width="14" height="14"><path d="M9 2h3v3H9zM5 6h3v3H5zM9 6h3v3H9zM1 10h3v3H1zM5 10h3v3H5zM9 10h3v3H9z" fill="#c0c0c0"/></svg>
    </div>
  </div>
</section>

<footer class="status"><span>就绪</span><span>Sybase SQL Anywhere 12</span></footer>

<footer class="taskbar">
  <button class="task" aria-label="开始"><svg width="24" height="26"><path d="M0 4l10-2v10H0zM11 2l13-2v12H11zM0 13h10v10L0 22zM11 13h13v12l-13-2z" fill="#fff"/></svg></button>
  <button class="task" aria-label="搜索"><svg width="32" height="32" fill="none" stroke="#fff" stroke-width="2"><circle cx="20" cy="11" r="9.500"/><path d="M13 18L1 31"/></svg></button>
  <button class="task" aria-label="任务视图"><svg width="30" height="28" fill="none" stroke="#fff" stroke-width="2"><path d="M1 0v5h19V0M1 8h19v12H1zM1 28v-5h19v5M28 0v5M28 12v16"/><path d="M27 7h3v3h-3z" fill="#fff" stroke="none"/></svg></button>
  <button class="task app stacked" aria-label="Microsoft Edge"><svg width="42" height="42" viewBox="0 0 42 42"><circle cx="21" cy="21" r="21" fill="#0d7cd8"/><path d="M1 17C3 6 12 0 21 0c12 0 21 8 21 18 0 7-5 10-11 10-4 0-8-1-7-3 4-4 2-10-4-12C12 10 4 12 1 17z" fill="url(#gEdge)"/><path d="M17 19c-5 9 2 20 13 20 3 0 6-3 9-7-10 4-19-1-19-9 0-3 1-4 1-6z" fill="#12509c"/><path d="M20 19c-1 8 4 13 11 13 4 0 7-1 10-4q1-2 1-6l-2 2c-3 4-8 4-12 4-5 0-4-2-4-3 2-2 1-5-1-7z" fill="#140808"/></svg></button>
  <button class="task app stacked" aria-label="文件资源管理器"><svg width="38" height="32" viewBox="0 0 38 32"><path d="M0 2q0-2 2-2h13l3 4v6H0z" fill="#e0a000"/><rect y="4" width="38" height="27" rx="2" fill="#ffd35c"/><path d="M7 32V20q0-3 3-3h18q3 0 3 3v12h-6v-6H13v6z" fill="#3c92dc"/></svg></button>
  <button class="task current stacked" aria-label="PowerDesigner"><svg width="40" height="36" viewBox="0 0 40 36"><path d="M0 20l22-6 18 12-24 10z" fill="#3c6cc8" stroke="#a8c4f0"/><path d="M6 22l18 10M14 18l16 11M12 32l18-12" stroke="#9cbcf0"/><path d="M19 0l6 15q-6 5-10 0z" fill="#7cc840"/><rect x="24" y="5" width="9" height="19" rx="3" fill="#f4c82c" stroke="#b88c10"/><circle cx="10" cy="17" r="7.500" fill="#e02020"/></svg></button>
  <div class="tray">
    <button class="weather"><svg width="40" height="42" viewBox="0 0 40 42"><path d="M14 0q4 14-14 19 8 10 20 4 6-13-6-23z" fill="#fdb813"/><circle cx="17" cy="26" r="9" fill="#dce6f6"/><circle cx="23" cy="24" r="9" fill="#e6eefa"/><rect x="3" y="26" width="35" height="16" rx="8" fill="#c8d8f0"/></svg><span>29°C</span><span>多云</span></button>
    <button class="chevron" aria-label="显示隐藏的图标"><svg width="18" height="12" fill="none" stroke="#fff" stroke-width="2"><path d="M1 10l8-8 8 8"/></svg></button>
    <button aria-label="更新"><svg width="30" height="28" viewBox="0 0 30 28" fill="none" stroke="#fff" stroke-width="1.500"><path d="M17 25L1 23V4l27-3v16M7 14q0-6 6-6l4 2M18 7v4h-4M17 15q-1 4-5 4l-4-2M8 21v-4h4"/><circle cx="21" cy="21" r="7" fill="#ff9800" stroke="none"/></svg></button>
    <button aria-label="电源"><svg width="30" height="24" viewBox="0 0 30 24" fill="none" stroke="#fff" stroke-width="2"><path d="M9 6h16v15H7v-6M26 10h3v7h-3M4 10v4q0 6 5 6"/><path d="M11 9h11v9H11z" fill="#fff" stroke="none"/><path d="M0 4h10v3q0 4-5 4T0 7zM2 0h2v4H2zM6 0h2v4H6z" fill="#fff" stroke="none"/></svg></button>
    <button aria-label="音量"><svg width="28" height="24" viewBox="0 0 28 24" fill="none" stroke="#fff" stroke-width="1.500"><path d="M1 8h4l6-6v20l-6-6H1zM15 8q3 4 0 8M18 5q6 7 0 14"/><path d="M22 2q8 10 0 20" stroke="#777"/></svg></button>
    <button class="ime">中</button>
    <button class="clock"><span>19:38</span><span>2022/9/14</span></button>
    <button class="notice" aria-label="通知"><svg width="42" height="44" viewBox="0 0 42 44"><path d="M0 2h28v24H15l-6 7v-7H0z" fill="#fff"/><path d="M6 9h16M6 14h16M6 19h10" stroke="#111" stroke-width="2"/></svg><b class="badge">1</b></button>
  </div>
</footer>
</body>
</html>
```
FILE: styles.css
```css
* { box-sizing: border-box; }
html, body { height: 100%; }
body {
  margin: 0;
  display: flex;
  flex-direction: column;
  background: #f0f0f0;
  color: #000;
  font-family: "Liberation Sans", "Noto Sans CJK SC", sans-serif;
  font-size: 16px;
  overflow: hidden;
}
button { border: 0; padding: 0; margin: 0; background: none; font: inherit; color: inherit; }
h1, h2, h3, ul { margin: 0; padding: 0; font-weight: 400; list-style: none; }
svg { display: block; flex: none; }
.defs { position: absolute; width: 0; height: 0; }

/* title bar and menu */
.titlebar, .menubar {
  display: flex;
  align-items: center;
  background: #fff;
  font-family: "Open Sans", "Noto Sans CJK SC", sans-serif;
  font-size: 22px;
}
.titlebar { height: 40px; }
.title-icon { width: 28px; height: 28px; margin: 0 6px 0 2px; }
.title-text { flex: 1; font-size: 22px; line-height: 36px; padding-bottom: 2px; white-space: nowrap; }
.zh { font-size: 21px; font-weight: 300; line-height: 1; }
.win-btn { width: 81px; height: 38px; display: grid; place-items: center; }
.titlebar .win-btn:last-child { margin-right: 2px; }
.menubar { height: 34px; gap: 15px; border-bottom: 2px solid #f0f0f0; }
.menu-icon { width: 28px; height: 28px; margin: 0 -8px 0 7px; }
.menu { line-height: 30px; padding-bottom: 2px; white-space: nowrap; }
.mdi { margin-left: auto; margin-right: 2px; display: flex; gap: 2px; color: #778899; }
.mdi-btn { width: 31px; height: 31px; border: 1px solid #e3e3e3; display: grid; place-items: center; }

/* tool bars */
.toolbars {
  display: flex;
  height: 32px;
  border-top: 1px solid #a0a0a0;
  border-bottom: 2px solid #888;
  background: #f0f0f0;
  box-shadow: inset 0 1px #fff;
}
.toolbar { display: flex; align-items: center; padding-right: 3px; border-right: 1px solid #a0a0a0; }
.toolbar::before {
  content: "";
  width: 5px;
  height: 26px;
  margin-left: 1px;
  border: solid #a0a0a0;
  border-width: 0 1px;
  box-shadow: inset 1px 0 #fff, 1px 0 #fff;
}
.tool { width: 23px; height: 22px; display: grid; place-items: center; }
.tool svg, .ico { width: 16px; height: 16px; }
.tool.on { background: #c2dcf2; border: 1px solid #8cbce4; }
.sep { width: 8px; height: 22px; background: linear-gradient(#a0a0a0, #a0a0a0) 3px 0 / 1px 100% no-repeat; }

/* work area */
.workspace { flex: 1; display: flex; min-height: 0; border-bottom: 1px solid #e3e3e3; }
.browser { width: 455px; display: flex; flex-direction: column; padding: 0 13px 1px 6px; border-bottom: 1px solid #a0a0a0; }
.dock-head { display: flex; align-items: center; gap: 2px; height: 19px; padding-top: 3px; margin-right: -2px; }
.grip { flex: 1; height: 8px; border: solid #a0a0a0; border-width: 1px 0; margin-right: 1px; box-shadow: inset 0 1px #fff, 0 1px #fff; }
.dock-btn {
  width: 12px;
  height: 12px;
  display: grid;
  place-items: center;
  border: 1px solid #fff;
  border-right-color: #808080;
  border-bottom-color: #808080;
}
.pane {
  flex: 1;
  display: flex;
  flex-direction: column;
  border: 1px solid #dcdcdc;
  padding: 3px;
  background: #fff;
}
.filter {
  display: flex;
  align-items: center;
  height: 30px;
  background: #f0f0f0;
  border-top: 2px solid #808080;
  border-left: 2px solid #808080;
  border-bottom: 1px solid #a0a0a0;
  padding: 0 3px 0 4px;
}
.filter input { flex: 1; height: 20px; margin: 0 2px 0 6px; border: 1px solid #808080; background: #fff; padding: 0 4px; font: inherit; }
.tree { flex: 1; border-left: 2px solid #808080; border-right: 1px solid #e3e3e3; border-bottom: 1px solid #e3e3e3; padding: 1px 0 0 4px; }
.tree li { display: flex; align-items: center; height: 22px; line-height: 20px; white-space: nowrap; }
.tree .ico { margin-right: 5px; }
.tree .lv1 { padding-left: 4px; }
.tree .lv2 { padding-left: 23px; }
.box { width: 9px; height: 9px; border: 1px solid #919191; background: linear-gradient(#2c4a94, #2c4a94) center / 5px 1px no-repeat; }
.box.plus { background: linear-gradient(#2c4a94, #2c4a94) center / 5px 1px no-repeat, linear-gradient(#2c4a94, #2c4a94) center / 1px 5px no-repeat; }
.dots { width: 6px; height: 1px; border-top: 1px dotted #808080; }
.dots.long { width: 11px; margin-left: 4px; }
.sel { background: #f0f0f0; padding: 0 1px; margin-left: -1px; }
.dock-tabs { display: flex; align-items: flex-start; height: 25px; font-size: 12px; }
.dock-tab { display: flex; align-items: center; gap: 6px; height: 21px; padding: 0 7px; border: 1px solid #dcdcdc; border-top: 0; }
.dock-tab.active { background: #fff; border-color: #fff #dcdcdc #fff #fff; }
.dock-tab:last-child { gap: 8px; padding: 0 3px; border-bottom: 0; }

.editor {
  flex: 1;
  position: relative;
  display: grid;
  grid-template-columns: 1fr 29px;
  grid-template-rows: 1fr 30px;
  border-left: 1px solid #696969;
  border-right: 2px solid #e3e3e3;
  min-width: 0;
}
.canvas { position: relative; background: #fff; overflow: hidden; }
.page-edge { position: absolute; top: 0; bottom: 1px; width: 1px; background: #000; }
.edge-l { left: 142px; }
.edge-r { left: 1895px; }
.wires { position: absolute; left: 0; top: 0; }

/* diagram entities */
.node {
  position: absolute;
  border: 1px solid #0080c0;
  background: linear-gradient(to bottom right, #fff, #d8e9fd 45%, #bfddfd 65%, #b0d5fc);
  font-family: "Liberation Mono", monospace;
  font-size: 23px;
}
.node h2 {
  height: 41px;
  border-bottom: 1px solid #0080c0;
  text-align: center;
  line-height: 34px;
}
.node h2, .cjk { font-family: "Noto Sans CJK SC", sans-serif; font-size: 28px; font-weight: 300; }
.cjk { line-height: 0; vertical-align: -2px; }
.node table { margin: 4px 0 0 11px; border-collapse: collapse; table-layout: fixed; width: 393px; }
.node td { padding: 0; line-height: 30px; white-space: nowrap; width: 125px; }
.node td:nth-child(2) { width: 192px; }
.node td:nth-child(3) { width: 76px; }
.node u { text-decoration-thickness: 1px; text-underline-offset: 3px; }
.node.wide table { width: 420px; }
.node.wide td:first-child { width: 152px; }
.node.narrow table { width: 314px; height: 215px; margin: 5px 0 0 12px; }
.node.narrow td:nth-child(2) { width: 113px; }
.n-type { left: 956px; top: 42px; width: 424px; height: 138px; }
.n-type table { height: 62px; }
.n-product { left: 539px; top: 256px; width: 423px; height: 205px; }
.n-product table { height: 154px; }
.n-user { left: 1215px; top: 256px; width: 396px; height: 298px; }
.n-user table { height: 246px; }
.n-out { left: 248px; top: 620px; width: 329px; height: 268px; }
.n-in { left: 899px; top: 604px; width: 328px; height: 268px; }

.palette {
  position: absolute;
  left: 1670px;
  top: 624px;
  width: 280px;
  background: #f0f0f0;
  border-top: 1px solid #696969;
  box-shadow: 0 4px 16px 2px rgba(0, 0, 0, .3);
}
.palette header { display: flex; justify-content: space-between; height: 51px; background: #fff; padding: 11px 1px 0 12px; }
.palette h3 { font-family: "Open Sans", sans-serif; font-size: 22px; line-height: 28px; }
.pal-close { width: 35px; height: 35px; background: #c75050; color: #fff; display: grid; place-items: center; }
.pal-grid { display: grid; grid-template-columns: repeat(12, 23px); row-gap: 1px; padding: 2px 2px 3px; }

/* scroll bars */
.vbar, .hbar { display: flex; background: #f0f0f0; }
.vbar { flex-direction: column; }
.vbar button, .hbar button { display: grid; place-items: center; flex: none; }
.vbar svg, .hbar svg { width: 16px; height: 16px; }
.vbar button { height: 32px; }
.hbar button { width: 30px; }
.track { flex: 1; }
.thumb { background: #cdcdcd; }
.vbar .thumb { height: 31px; }
.hbar .thumb { width: 68px; }
.hbar.small .thumb, .vbar.small .thumb { flex: 1; width: auto; height: auto; }
.vbar.small svg, .hbar.small svg { width: 11px; height: 11px; }
.vbar.small button { height: 16px; }
.hbar.small button { width: 17px; }
.capsule {
  position: absolute;
  right: -2px;
  top: 114px;
  width: 16px;
  height: 90px;
  border: 3px solid #7a7a7a;
  border-radius: 8px;
  background: #f4f4f4;
  padding: 27px 2px 1px;
}
.capsule i { display: block; height: 100%; border-radius: 3px; background: linear-gradient(#ffc080, #ff8030); }

/* output pane */
.output {
  display: flex;
  height: 388px;
  border-top: 1px solid #fff;
  border-bottom: 1px solid #a0a0a0;
  padding: 7px 9px 4px 3px;
  background: linear-gradient(#000, #000) 0 3px / 100% 2px no-repeat, #f0f0f0;
}
.out-grip { width: 15px; display: flex; flex-direction: column; gap: 3px; }
.vgrip { flex: 1; width: 6px; margin-left: 4px; border: solid #a0a0a0; border-width: 0 1px; }
.out-body {
  flex: 1;
  display: grid;
  grid-template-columns: 1fr 14px;
  grid-template-rows: 1fr 17px;
  border: 2px solid #808080;
  border-right: 1px solid #e3e3e3;
  border-bottom: 1px solid #e3e3e3;
  background: #fff;
}
.out-foot { grid-column: 1 / 3; display: flex; background: #f0f0f0; }
.tabs { display: flex; flex: 0 0 1078px; background: #c8c8c8; border-right: 1px solid #000; box-shadow: 0 -1px #000; font-size: 12px; margin-right: 3px; }
.nav-btn { width: 16px; display: grid; place-items: center; background: #f0f0f0; border-right: 1px solid #000; }
.cut { width: 10px; height: 17px; fill: none; }
.tab { padding: 0 3px 0 2px; background: #f0f0f0; line-height: 16px; }
.tab.active { background: #fff; box-shadow: 0 -1px #fff; padding-right: 2px; }
.out-foot .hbar { flex: 1; }
.size-grip { width: 14px; }

.status { display: flex; justify-content: space-between; height: 24px; padding: 0 12px 0 2px; border-top: 1px solid #dcdcdc; box-shadow: inset 0 1px #fff; line-height: 24px; }

/* taskbar */
.taskbar {
  display: flex;
  height: 70px;
  color: #fff;
  font-family: "Open Sans", "Noto Sans CJK SC", sans-serif;
  background:
    radial-gradient(40px 30px at 375px 8px, rgba(120, 40, 50, .5), transparent),
    radial-gradient(70px 60px at 520px 60px, rgba(100, 20, 30, .5), transparent),
    radial-gradient(60px 60px at 420px 40px, rgba(40, 45, 25, .7), transparent),
    radial-gradient(70px 50px at 720px 40px, rgba(62, 78, 72, .6), transparent),
    radial-gradient(60px 30px at 920px 15px, rgba(62, 76, 66, .7), transparent),
    linear-gradient(90deg, #140605 0, #180807 12%, #120303 20%, #120202 25%, #3a3733 26%, #34382f 30%, #343f3c 33%, #3a2f26 34%, #080605 36%, #080a0a 42%, #020304 49%, #000 55%, #1a200e 58%, #1c1f10 59%, #352c22 60%, #3a362f 63%, #35332f 67%, #020202 69%, #040707 73%, #090303 78%, #0c0303 100%);
}
.task { width: 84px; display: grid; place-items: center; }
.task.app { width: 87px; padding-left: 8px; }
.stacked { background: linear-gradient(90deg, #76b9ed 0 56px, #5a8ab4 56px) 12px 100% / 71px 4px no-repeat; }
.task.current {
  width: 85px;
  margin-left: 5px;
  background:
    linear-gradient(90deg, #76b9ed 0 79px, #5a8ab4 79px) 0 100% / 85px 4px no-repeat,
    linear-gradient(90deg, rgba(150, 150, 150, .35) 0 78px, rgba(90, 90, 90, .5) 78px);
}
.tray { margin-left: auto; display: flex; align-items: center; gap: 12px; padding-right: 30px; font-size: 24px; }
.weather { display: flex; align-items: center; gap: 16px; margin-right: 22px; }
.chevron { margin-right: 6px; }
.ime { font-size: 26px; margin-left: 2px; }
.clock { display: flex; flex-direction: column; align-items: center; width: 116px; font-size: 22px; line-height: 32px; }
.notice { position: relative; margin-left: 14px; }
.badge {
  position: absolute;
  right: 0;
  bottom: -4px;
  width: 29px;
  height: 29px;
  border: 1px solid #999;
  border-radius: 50%;
  background: #262626;
  font-size: 20px;
  line-height: 27px;
  text-align: center;
}
```
